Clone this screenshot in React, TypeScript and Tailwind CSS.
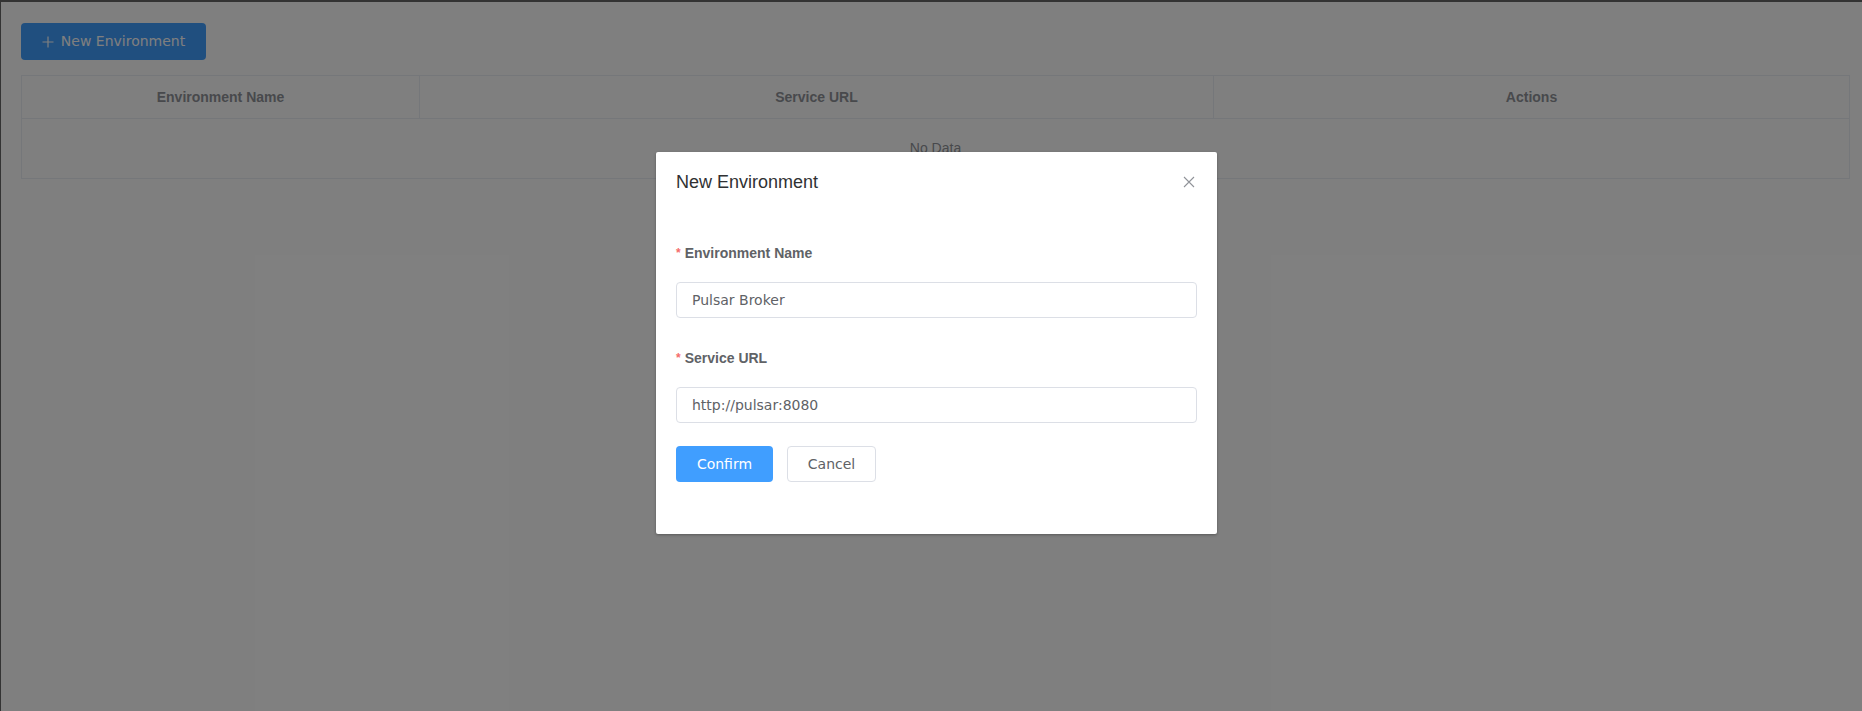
import React, { useState } from 'react';

const sans = { fontFamily: '"Liberation Sans", Arial, sans-serif' };

function PlusIcon() {
  return (
    <svg width="12" height="12" viewBox="0 0 12 12" className="shrink-0">
      <path d="M6 0.5v11M0.5 6h11" stroke="currentColor" strokeWidth="1.2" fill="none" />
    </svg>
  );
}

function CloseIcon() {
  return (
    <svg width="12" height="12" viewBox="0 0 12 12">
      <path d="M1 1l10 10M11 1L1 11" stroke="#909399" strokeWidth="1.1" fill="none" />
    </svg>
  );
}

function Field({ label, value, onChange }: { label: string; value: string; onChange: (v: string) => void }) {
  return (
    <div>
      <div className="h-5 flex items-center text-[14px] font-bold text-[#606266] font-['Liberation_Sans',Arial,sans-serif]">
        <span className="text-[#F56C6C] mr-[4px] text-[12px]">*</span>
        {label}
      </div>
      <input
        value={value}
        onChange={(e) => onChange(e.target.value)}
        className="mt-[19px] w-full h-[36px] border border-[#DCDFE6] rounded-[4px] px-[15px] text-[14px] text-[#606266] font-['DejaVu_Sans',sans-serif] outline-none focus:border-[#409EFF]"
      />
    </div>
  );
}

export default function App() {
  const [name, setName] = useState('Pulsar Broker');
  const [url, setUrl] = useState('http://pulsar:8080');

  return (
    <div className="relative w-full h-[711px] bg-[#333333] pt-[2px] pl-[1px] overflow-hidden">
      <div className="relative h-full bg-white pl-[20px] pt-[21px] pr-[12px]">
        {/* Page */}
        <button className="h-[37px] w-[185px] bg-[#409EFF] text-white rounded-[4px] flex items-center justify-center gap-[7px] text-[14px] font-['DejaVu_Sans',sans-serif]">
          <PlusIcon />
          New Environment
        </button>

        <div className="mt-[15px] border border-[#EBEEF5]" style={sans}>
          <div className="grid grid-cols-[398px_794px_1fr] h-[43px] border-b border-[#EBEEF5] text-[14px] font-bold text-[#909399]">
            <div className="flex items-center justify-center border-r border-[#EBEEF5]">Environment Name</div>
            <div className="flex items-center justify-center border-r border-[#EBEEF5]">Service URL</div>
            <div className="flex items-center justify-center">Actions</div>
          </div>
          <div className="h-[59px] flex items-center justify-center text-[14px] text-[#909399]">No Data</div>
        </div>

        {/* Overlay */}
        <div className="absolute inset-0 bg-black/50" />

        {/* Dialog */}
        <div className="absolute left-[655px] top-[150px] w-[561px] h-[382px] bg-white rounded-[2px] shadow-[0_1px_3px_rgba(0,0,0,0.3)]">
          <div className="pt-[18px] px-5 flex items-center justify-between">
            <span className="text-[18px] leading-6 text-[#303133]" style={sans}>New Environment</span>
            <button className="mr-[2px]">
              <CloseIcon />
            </button>
          </div>
          <div className="px-5 mt-[49px]">
            <Field label="Environment Name" value={name} onChange={setName} />
            <div className="mt-[30px]">
              <Field label="Service URL" value={url} onChange={setUrl} />
            </div>
            <div className="mt-[23px] flex gap-[14px] font-['DejaVu_Sans',sans-serif] text-[14px]">
              <button className="h-[36px] w-[97px] bg-[#409EFF] text-white rounded-[4px]">Confirm</button>
              <button className="h-[36px] w-[89px] border border-[#DCDFE6] text-[#606266] rounded-[4px] bg-white">Cancel</button>
            </div>
          </div>
        </div>
      </div>
    </div>
  );
}
